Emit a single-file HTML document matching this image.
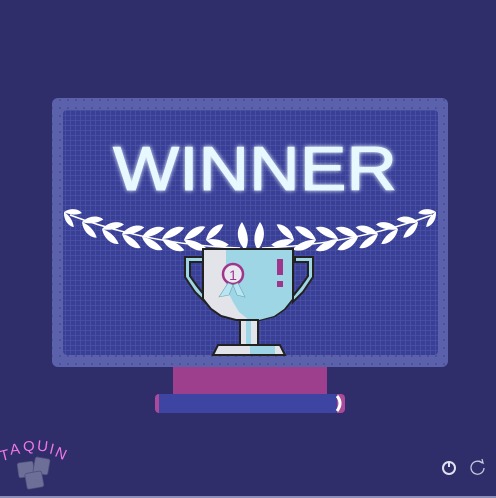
<!DOCTYPE html>
<html><head><meta charset="utf-8"><style>
html,body{margin:0;padding:0;background:#2f2d6a;width:496px;height:498px;overflow:hidden}
svg{display:block}
</style></head><body>
<svg width="496" height="498" viewBox="0 0 496 498" xmlns="http://www.w3.org/2000/svg">
<defs>
<pattern id="grid" width="5" height="5" patternUnits="userSpaceOnUse">
<rect width="5" height="5" fill="#3a3f96"/>
<path d="M0 0.5H5M0.5 0V5" stroke="#4a52a8" stroke-width="0.7"/>
</pattern>
<pattern id="dots" width="8" height="8" patternUnits="userSpaceOnUse">
<rect width="8" height="8" fill="#5b61ab"/>
<circle cx="4" cy="4" r="0.8" fill="#3b3f86"/>
</pattern>
<filter id="glow" x="-20%" y="-50%" width="140%" height="200%">
<feGaussianBlur stdDeviation="2.5" result="b"/>
<feMerge><feMergeNode in="b"/><feMergeNode in="SourceGraphic"/></feMerge>
</filter>
<g id="leaf"><path d="M0 0 C4 -8 12 -10 16 -8 C12 -3 6 0 0 0Z M0 0 C4 8 12 10 16 8 C12 3 6 0 0 0Z" fill="#fff"/></g>
</defs>
<rect x="52" y="98" width="396" height="269" rx="6" fill="url(#dots)"/>
<rect x="63" y="110" width="375" height="245" rx="4" fill="url(#grid)"/>
<rect x="173" y="367" width="154" height="28" fill="#9d3f8d"/>
<rect x="155" y="394" width="190" height="19" rx="4" fill="#aa4a9a"/>
<rect x="159" y="394" width="178" height="19" fill="#3e44a2"/>
<path d="M337 396 q6 7 0 15" stroke="#fff" stroke-width="3" fill="none"/>
<text x="113" y="190" textLength="284" lengthAdjust="spacingAndGlyphs" font-family="Liberation Sans, sans-serif" font-size="62" fill="#e8f8ff" stroke="#e8f8ff" stroke-width="1" filter="url(#glow)">WINNER</text>
<!-- laurels -->
<g>
<path d="M70 215 Q150 245 240 248" stroke="#fff" stroke-width="1.5" fill="none"/>
<path d="M432 215 Q350 245 262 248" stroke="#fff" stroke-width="1.5" fill="none"/>
<use href="#leaf" transform="translate(64,212) rotate(30) scale(1.0)"/>
<use href="#leaf" transform="translate(82,222) rotate(20) scale(1.2)"/>
<use href="#leaf" transform="translate(102,229) rotate(15) scale(1.25)"/>
<use href="#leaf" transform="translate(122,234) rotate(10) scale(1.3)"/>
<use href="#leaf" transform="translate(142,237) rotate(5) scale(1.35)"/>
<use href="#leaf" transform="translate(162,239) rotate(0) scale(1.4)"/>
<use href="#leaf" transform="translate(184,240) rotate(-5) scale(1.4)"/>
<use href="#leaf" transform="translate(206,240) rotate(-15) scale(1.3)"/>
<use href="#leaf" transform="translate(436,212) rotate(150) scale(1.0)"/>
<use href="#leaf" transform="translate(418,222) rotate(160) scale(1.2)"/>
<use href="#leaf" transform="translate(398,229) rotate(165) scale(1.25)"/>
<use href="#leaf" transform="translate(378,234) rotate(170) scale(1.3)"/>
<use href="#leaf" transform="translate(358,237) rotate(175) scale(1.35)"/>
<use href="#leaf" transform="translate(338,239) rotate(180) scale(1.4)"/>
<use href="#leaf" transform="translate(316,240) rotate(185) scale(1.4)"/>
<use href="#leaf" transform="translate(294,240) rotate(195) scale(1.3)"/>
<path d="M245 250 C236 240 236 230 242 222 C248 232 250 242 245 250Z M258 250 C265 240 266 230 260 222 C254 232 252 242 258 250Z" fill="#fff"/>
</g>
<!-- trophy -->
<g>
<path d="M203 257 h-18 v20 l10 15 l10 10 v-6 l-8 -10 l-7 -10 v-14 h13z" fill="#9ed6e6" stroke="#222" stroke-width="2"/>
<path d="M295 257 h18 v20 l-10 15 l-10 10 v-6 l8 -10 l7 -10 v-14 h-13z" fill="#9ed6e6" stroke="#222" stroke-width="2"/>
<path d="M203 249 h90 v50 l-8 10 l-10 7 l-15 4 h-24 l-15 -4 l-10 -7 l-8 -10z" fill="#e3e3ea" stroke="#222" stroke-width="2"/>
<path d="M226 250 h66 v49 l-8 10 l-10 7 l-15 4 h-10 l-10 -8 l-6 -10 l-4 -8 l-3 -10z" fill="#9ed6e6"/>
<rect x="277" y="259" width="6" height="16" fill="#a0358c"/>
<rect x="277" y="281" width="6" height="6" fill="#a0358c"/>
<circle cx="233" cy="274" r="10" fill="#e8e8f0" stroke="#a0358c" stroke-width="2.5"/>
<text x="233" y="280" text-anchor="middle" font-family="Liberation Sans, sans-serif" font-size="14" fill="#a0358c">1</text>
<path d="M228 283 l-9 14 l10 -2 l4 -10z M238 283 l7 14 l-8 -2 l-4 -10z" fill="#b8e4f4" stroke="#6aa" stroke-width="0.6"/>
<rect x="240" y="320" width="18" height="25" fill="#e3e3ea" stroke="#222" stroke-width="2"/>
<rect x="246" y="321" width="5" height="23" fill="#9ed6e6"/>
<path d="M213 355 l5 -10 h62 l5 10z" fill="#e3e3ea" stroke="#222" stroke-width="2"/>
<rect x="250" y="346" width="25" height="8" fill="#9ed6e6"/>
</g>
<!-- logo -->
<g font-family="Liberation Sans, sans-serif" font-size="15" fill="#ef78e6">
<text x="0" y="460" transform="rotate(-14 6 455)">T</text>
<text x="10" y="454" transform="rotate(-7 16 450)">A</text>
<text x="23" y="451">Q</text>
<text x="37" y="451" transform="rotate(7 42 448)">U</text>
<text x="49" y="454" transform="rotate(14 52 452)">I</text>
<text x="55" y="459" transform="rotate(24 62 455)">N</text>
</g>
<g fill="#6d6f99" stroke="#4d4f7a" stroke-width="0.8">
<rect x="18" y="462" width="16" height="15" rx="2" transform="rotate(-8 26 470)"/>
<rect x="34" y="458" width="15" height="16" rx="2" transform="rotate(10 42 466)"/>
<rect x="26" y="472" width="17" height="16" rx="2" transform="rotate(-10 35 481)"/>
</g>
<!-- icons -->
<circle cx="449" cy="468" r="6" fill="none" stroke="#e0e0ee" stroke-width="2"/>
<path d="M449 461 v6" stroke="#e0e0ee" stroke-width="2"/>
<path d="M482 463 A6.5 6.5 0 1 0 484 468" fill="none" stroke="#c8c8dc" stroke-width="1.3"/>
<path d="M479 461 l4 2 l-1 -4" fill="none" stroke="#c8c8dc" stroke-width="1.3"/>
<rect x="0" y="496" width="496" height="2" fill="#8d8fb9"/>
</svg>
</body></html>
